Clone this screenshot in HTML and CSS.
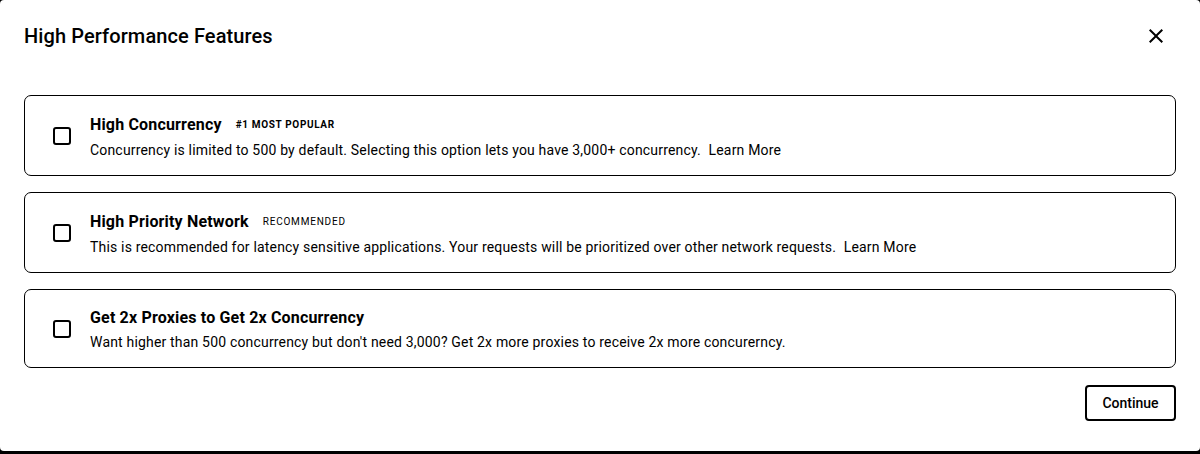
FILE: index.html
```html
<!DOCTYPE html>
<html lang="en">
<head>
<meta charset="utf-8">
<title>High Performance Features</title>
<link rel="stylesheet" href="styles.css">
</head>
<body>
<div class="modal">
  <div class="modal-header">
    <h2 class="modal-title">High Performance Features</h2>
    <button class="close-btn" aria-label="Close">
      <svg width="24" height="24" viewBox="0 0 24 24"><path d="M19 6.41L17.59 5 12 10.59 6.41 5 5 6.41 10.59 12 5 17.59 6.41 19 12 13.41 17.59 19 19 17.59 13.41 12z" fill="#000"/></svg>
    </button>
  </div>
  <div class="options">
    <label class="option">
      <svg class="checkbox" width="24" height="24" viewBox="0 0 24 24"><rect x="4" y="4" width="16" height="16" rx="2" fill="none" stroke="#000" stroke-width="2"/></svg>
      <div class="option-text">
        <div class="option-title-row">
          <span class="option-title">High Concurrency</span>
          <span class="badge badge-bold">#1 MOST POPULAR</span>
        </div>
        <div class="option-desc">Concurrency is limited to 500 by default. Selecting this option lets you have 3,000+ concurrency. <a class="learn">Learn More</a></div>
      </div>
    </label>
    <label class="option option-active">
      <svg class="checkbox" width="24" height="24" viewBox="0 0 24 24"><rect x="4" y="4" width="16" height="16" rx="2" fill="none" stroke="#000" stroke-width="2"/></svg>
      <div class="option-text">
        <div class="option-title-row">
          <span class="option-title">High Priority Network</span>
          <span class="badge">RECOMMENDED</span>
        </div>
        <div class="option-desc">This is recommended for latency sensitive applications. Your requests will be prioritized over other network requests. <a class="learn">Learn More</a></div>
      </div>
    </label>
    <label class="option option-plain">
      <svg class="checkbox" width="24" height="24" viewBox="0 0 24 24"><rect x="4" y="4" width="16" height="16" rx="2" fill="none" stroke="#000" stroke-width="2"/></svg>
      <div class="option-text">
        <div class="option-title-row">
          <span class="option-title">Get 2x Proxies to Get 2x Concurrency</span>
        </div>
        <div class="option-desc">Want higher than 500 concurrency but don't need 3,000? Get 2x more proxies to receive 2x more concurerncy.</div>
      </div>
    </label>
  </div>
  <div class="modal-footer">
    <button class="continue-btn">Continue</button>
  </div>
</div>
</body>
</html>
```
FILE: styles.css
```css
html, body {
  margin: 0;
  padding: 0;
  background: #000;
}
body {
  font-family: Roboto, "Liberation Sans", Arial, sans-serif;
  color: #000;
}
.modal {
  background: #fff;
  height: 451px;
  border-radius: 4px;
  box-sizing: border-box;
}
.modal-header {
  display: flex;
  align-items: center;
  justify-content: space-between;
  padding: 16px 24px 0;
  height: 40px;
}
.modal-title {
  margin: 0;
  font-size: 20px;
  line-height: 24px;
  font-weight: 500;
  letter-spacing: 0.1px;
}
.close-btn {
  width: 40px;
  height: 40px;
  border: none;
  background: none;
  padding: 0;
  display: flex;
  align-items: center;
  justify-content: center;
  cursor: pointer;
}
.options {
  display: flex;
  flex-direction: column;
  gap: 16px;
  padding: 39px 24px 0;
}
.option {
  display: flex;
  align-items: center;
  gap: 16px;
  border: 1px solid #000;
  border-radius: 7px;
  padding: 15px 25px;
}
.option-plain {
  padding-top: 16px;
}
.checkbox {
  flex: none;
}
.option-text {
  display: flex;
  flex-direction: column;
}
.option-title-row {
  display: flex;
  align-items: center;
  gap: 14px;
}
.option-title {
  font-size: 16px;
  line-height: 24px;
  font-weight: 700;
  letter-spacing: 0.17px;
}
.badge {
  font-size: 10px;
  line-height: 19px;
  padding: 4px 0;
  letter-spacing: 0.8px;
  font-weight: 400;
}
.badge-bold {
  font-weight: 700;
  letter-spacing: 0.65px;
}
.option-desc {
  margin-top: 2px;
  font-size: 14px;
  line-height: 20px;
  letter-spacing: 0.18px;
}
.learn {
  margin-left: 4px;
  color: #000;
}
.modal-footer {
  display: flex;
  justify-content: flex-end;
  padding: 17px 24px 0;
}
.continue-btn {
  width: 91px;
  height: 36px;
  border: 2px solid #000;
  border-radius: 4px;
  background: #fff;
  font-family: Roboto, "Liberation Sans", Arial, sans-serif;
  font-size: 14px;
  font-weight: 500;
  color: #000;
  padding: 0;
}
```
